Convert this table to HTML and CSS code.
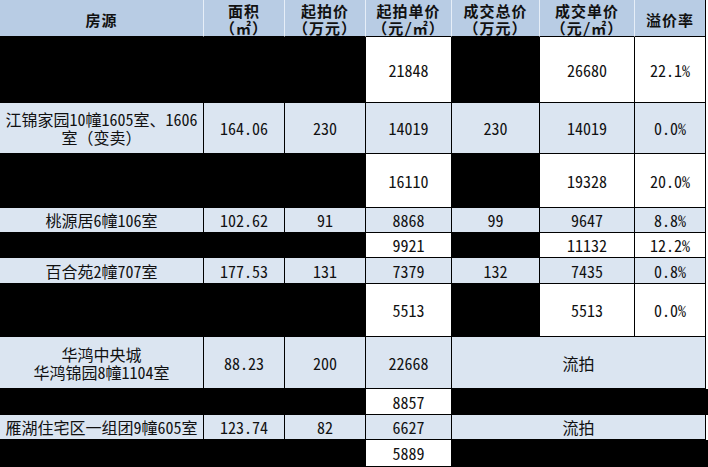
FILE: index.html
```html
<!DOCTYPE html>
<html lang="zh-CN">
<head>
<meta charset="utf-8">
<title>拍卖成交表</title>
<link rel="stylesheet" href="styles.css">
</head>
<body>
<div class="sheet">
  <!-- header -->
  <div class="c hd">房源</div>
  <div class="c hd"><span class="ln">面积</span><span class="ln">（㎡）</span></div>
  <div class="c hd"><span class="ln">起拍价</span><span class="ln">（万元）</span></div>
  <div class="c hd"><span class="ln">起拍单价</span><span class="ln">（元/㎡）</span></div>
  <div class="c hd"><span class="ln">成交总价</span><span class="ln">（万元）</span></div>
  <div class="c hd"><span class="ln">成交单价</span><span class="ln">（元/㎡）</span></div>
  <div class="c hd last">溢价率</div>
  <div class="fill"></div>

  <!-- row 1 -->
  <div class="c bk span3"></div>
  <div class="c wh">21848</div>
  <div class="c bk"></div>
  <div class="c wh">26680</div>
  <div class="c wh">22.1%</div>
  <div class="fill"></div>

  <!-- row 2 -->
  <div class="c bl">江锦家园10幢1605室、1606<br>室（变卖）</div>
  <div class="c bl">164.06</div>
  <div class="c bl">230</div>
  <div class="c bl">14019</div>
  <div class="c bl">230</div>
  <div class="c bl">14019</div>
  <div class="c bl">0.0%</div>
  <div class="fill"></div>

  <!-- row 3 -->
  <div class="c bk span3"></div>
  <div class="c wh">16110</div>
  <div class="c bk"></div>
  <div class="c wh">19328</div>
  <div class="c wh">20.0%</div>
  <div class="fill"></div>

  <!-- row 4 -->
  <div class="c bl">桃源居6幢106室</div>
  <div class="c bl">102.62</div>
  <div class="c bl">91</div>
  <div class="c bl">8868</div>
  <div class="c bl">99</div>
  <div class="c bl">9647</div>
  <div class="c bl">8.8%</div>
  <div class="fill"></div>

  <!-- row 5 -->
  <div class="c bk span3"></div>
  <div class="c wh">9921</div>
  <div class="c bk"></div>
  <div class="c wh">11132</div>
  <div class="c wh">12.2%</div>
  <div class="fill"></div>

  <!-- row 6 -->
  <div class="c bl">百合苑2幢707室</div>
  <div class="c bl">177.53</div>
  <div class="c bl">131</div>
  <div class="c bl">7379</div>
  <div class="c bl">132</div>
  <div class="c bl">7435</div>
  <div class="c bl">0.8%</div>
  <div class="fill"></div>

  <!-- row 7 -->
  <div class="c bk span3"></div>
  <div class="c wh">5513</div>
  <div class="c bk"></div>
  <div class="c wh">5513</div>
  <div class="c wh">0.0%</div>
  <div class="fill"></div>

  <!-- row 8 -->
  <div class="c bl">华鸿中央城<br>华鸿锦园8幢1104室</div>
  <div class="c bl">88.23</div>
  <div class="c bl">200</div>
  <div class="c bl">22668</div>
  <div class="c bl span3">流拍</div>
  <div class="fill"></div>

  <!-- row 9 -->
  <div class="c bk span3"></div>
  <div class="c wh">8857</div>
  <div class="c bk span4"></div>

  <!-- row 10 -->
  <div class="c bl">雁湖住宅区一组团9幢605室</div>
  <div class="c bl">123.74</div>
  <div class="c bl">82</div>
  <div class="c bl">6627</div>
  <div class="c bl span3">流拍</div>
  <div class="fill"></div>

  <!-- row 11 -->
  <div class="c bk span3"></div>
  <div class="c wh">5889</div>
  <div class="c bk span4"></div>
</div>
</body>
</html>
```

FILE: styles.css
```css
html, body {
  margin: 0;
  padding: 0;
  background: #ffffff;
}

body {
  width: 708px;
  height: 467px;
  overflow: hidden;
  font-family: "Noto Sans Mono CJK SC", "Noto Sans CJK SC", sans-serif;
  font-size: 16px;
  color: #111111;
}

.sheet {
  display: grid;
  grid-template-columns: 204px 81px 81px 86px 88px 95px 71px 2px;
  grid-template-rows: 37px 66px 51px 54px 25px 25px 26px 53px 52px 26px 25px 27px;
  width: 708px;
}

.c {
  box-sizing: border-box;
  display: flex;
  align-items: center;
  justify-content: center;
  text-align: center;
  line-height: 18px;
  border-right: 1px solid #000000;
  border-bottom: 1px solid #000000;
  white-space: nowrap;
}

.hd {
  flex-direction: column;
  background: #b8cce4;
  font-size: 15px;
  font-weight: 700;
  line-height: 17px;
  letter-spacing: 1px;
  border-right-color: #e6eef8;
  border-bottom-color: #000000;
  padding-top: 2px;
}

.ln {
  display: block;
  height: 17px;
}

.hd.last {
  border-right-color: #000000;
}

.bl {
  background: #dbe5f1;
}

.wh {
  background: #ffffff;
}

.bk {
  background: #000000;
}

.fill {
  background: #ffffff;
}

.span3 {
  grid-column: span 3;
}

.span4 {
  grid-column: span 4;
}
```
